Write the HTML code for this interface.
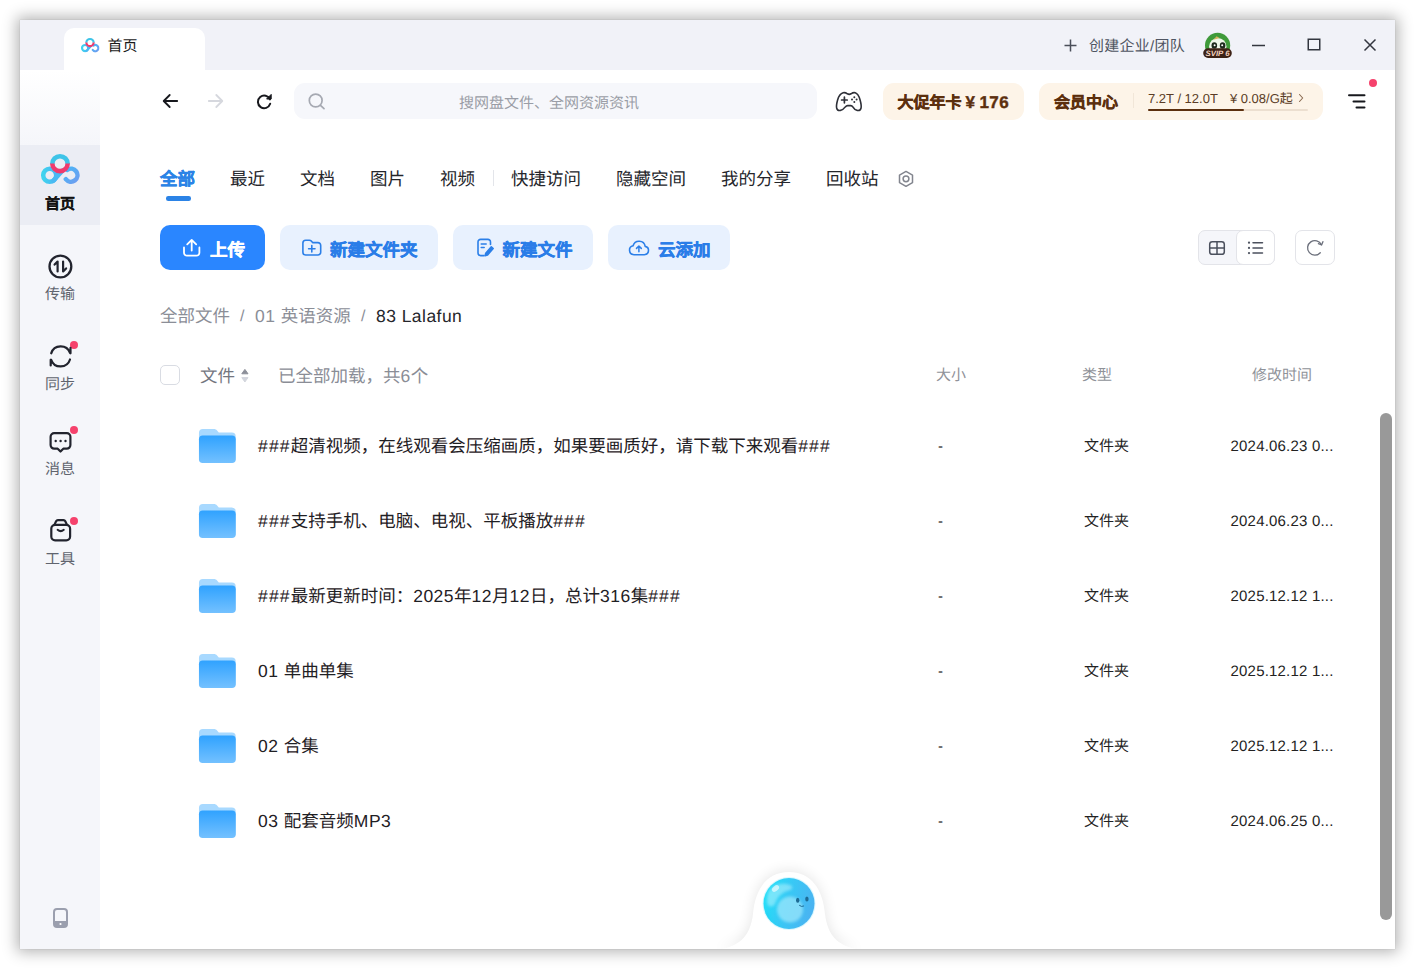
<!DOCTYPE html>
<html lang="zh-CN">
<head>
<meta charset="utf-8">
<title>首页</title>
<style>
*{box-sizing:border-box;margin:0;padding:0}
html,body{width:1415px;height:969px;overflow:hidden;background:#fff}
body{font-family:"Liberation Sans",sans-serif;text-rendering:geometricPrecision;position:relative;color:#1a1a1a}
.abs{position:absolute}
.t{position:absolute;white-space:nowrap;line-height:1}
#win{position:absolute;left:20px;top:20px;width:1375px;height:929px;background:#fff;
 box-shadow:0 0 1px rgba(0,0,0,.18),0 0 14px 3px rgba(0,0,0,.30);}
#titlebar{position:absolute;left:0;top:0;width:1375px;height:50px;background:#f1f2f8}
#tab{position:absolute;left:44px;top:8px;width:141px;height:42px;background:#fff;border-radius:10px 10px 0 0}
#side{position:absolute;left:0;top:50px;width:80px;height:879px;background:linear-gradient(#ffffff 0px,#f5f6fa 75px,#f5f6fa 100%)}
#side .sel{position:absolute;left:0;top:75px;width:80px;height:80px;background:#ebedf4}
.slabel{position:absolute;left:0;width:80px;text-align:center;font-size:15px;line-height:16px;color:#60646e;white-space:nowrap}
.dot{position:absolute;width:8px;height:8px;border-radius:50%;background:#f5426c}
#search{position:absolute;left:274px;top:63px;width:523px;height:36px;border-radius:11px;background:#f6f7fb}
.badge{position:absolute;top:63px;height:36.500px;border-radius:11px;background:#fdf4e8}
.nav{position:absolute;top:149px;font-size:17.5px;line-height:20px;color:#25262b;white-space:nowrap}
.btn{position:absolute;top:205px;height:45px;border-radius:10px;background:#e8f1fe;color:#2a7de8;font-weight:bold;font-size:17.5px;white-space:nowrap}
.btn span{position:absolute;top:15px;line-height:20px;-webkit-text-stroke:.45px currentColor}
.hv{-webkit-text-stroke:.4px currentColor}
.hdr{position:absolute;top:347px;font-size:15px;line-height:18px;color:#8f9299;white-space:nowrap}
.row{position:absolute;left:140px;width:1200px;height:75px}
.row .nm{position:absolute;left:98px;top:27px;font-size:17.5px;line-height:22px;color:#1f2024;white-space:nowrap}
.row .sz{position:absolute;left:778px;top:29px;font-size:15px;line-height:20px;color:#222}
.row .ty{position:absolute;left:924px;top:29px;font-size:15px;line-height:20px;color:#222;white-space:nowrap}
.row .dt{position:absolute;left:1070.500px;top:29px;font-size:15px;letter-spacing:.2px;line-height:20px;color:#222;white-space:nowrap}
.row .nm i{font-style:normal;letter-spacing:1.15px}
.ls{letter-spacing:.5px}
.ls b,.nm b{font-weight:normal;letter-spacing:.5px}
.row svg.fd{position:absolute;left:38px;top:19.500px}
</style>
</head>
<body>
<div id="win">
  <div id="titlebar">
    <div id="tab"></div>
    <div class="t" style="left:87.500px;top:19px;font-size:15px;color:#1a1a1a">首页</div>
    <div class="t" style="left:1069px;top:18.500px;font-size:15px;letter-spacing:.25px;color:#4f5562">创建企业/团队</div>
  </div>
  <div id="side">
    <div class="sel"></div>
    <div class="slabel hv" style="top:127px;color:#111;font-weight:bold;-webkit-text-stroke:.15px #111">首页</div>
    <div class="slabel" style="top:216.500px">传输</div>
    <div class="slabel" style="top:306.500px">同步</div>
    <div class="slabel" style="top:391.500px">消息</div>
    <div class="slabel" style="top:481.500px">工具</div>
    <div class="dot" style="left:50px;top:270.800px"></div>
    <div class="dot" style="left:50px;top:356.300px"></div>
    <div class="dot" style="left:50px;top:446.600px"></div>
  </div>

  <!-- toolbar -->
  <div id="search"></div>
  <div class="t" style="left:439px;top:75.500px;font-size:15px;color:#9a9da6">搜网盘文件、全网资源资讯</div>
  <div class="badge" style="left:863px;width:141px"></div>
  <div class="t hv" style="left:877.5px;top:74px;font-size:16px;font-weight:bold;color:#5c2f0e">大促年卡<span style="margin-left:4px;font-size:17px">¥</span><span style="margin-left:4.5px;letter-spacing:.4px;font-size:17px">176</span></div>
  <div class="badge" style="left:1019px;width:284px"></div>
  <div class="t hv" style="left:1034px;top:76px;font-size:16px;font-weight:bold;color:#5c2f0e">会员中心</div>
  <div class="abs" style="left:1113px;top:73px;width:1px;height:15px;background:#f1e6d8"></div>
  <div class="t" style="left:1128px;top:72px;font-size:13px;color:#5a3c26">7.2T / 12.0T</div>
  <div class="t" style="left:1210px;top:72px;font-size:13px;color:#5a3c26">¥<span style="margin-left:3.500px">0.08/G起</span></div>
  <div class="abs" style="left:1128px;top:89px;width:160px;height:2px;background:#ecdfd0;border-radius:1px"></div>
  <div class="abs" style="left:1128px;top:89px;width:96px;height:2px;background:#5c2f0e;border-radius:1px"></div>
  <div class="dot" style="left:1349px;top:59px;width:8px;height:8px"></div>

  <!-- nav tabs -->
  <div class="nav hv" style="left:140px;color:#2b83e6;font-weight:bold">全部</div>
  <div class="abs" style="left:145.500px;top:176px;width:25px;height:4.500px;border-radius:2.250px;background:#2b83e6"></div>
  <div class="nav" style="left:210px">最近</div>
  <div class="nav" style="left:280px">文档</div>
  <div class="nav" style="left:350px">图片</div>
  <div class="nav" style="left:420px">视频</div>
  <div class="abs" style="left:473px;top:150px;width:1px;height:16px;background:#e3e5ea"></div>
  <div class="nav" style="left:491px">快捷访问</div>
  <div class="nav" style="left:596px">隐藏空间</div>
  <div class="nav" style="left:701px">我的分享</div>
  <div class="nav" style="left:806px">回收站</div>

  <!-- buttons -->
  <div class="btn" style="left:140px;width:105px;background:#2a86ff;color:#fff"><span style="left:50px">上传</span></div>
  <div class="btn" style="left:260px;width:158px"><span style="left:50px">新建文件夹</span></div>
  <div class="btn" style="left:433px;width:140px"><span style="left:49.500px">新建文件</span></div>
  <div class="btn" style="left:588px;width:122px"><span style="left:50px">云添加</span></div>

  <div class="abs" style="left:1178px;top:210px;width:77px;height:35px;border:1px solid #e3e4e9;border-radius:7px;background:#f5f6fa"></div>
  <div class="abs" style="left:1216px;top:210px;width:39px;height:35px;border:1px solid #e3e4e9;border-radius:7px;background:#fff"></div>
  <div class="abs" style="left:1275px;top:210px;width:40px;height:35px;border:1px solid #e3e4e9;border-radius:7px;background:#fff"></div>

  <!-- breadcrumb -->
  <div class="t" style="left:140px;top:288px;font-size:17.5px;color:#8b8e97">全部文件</div>
  <div class="t" style="left:220px;top:289px;font-size:16px;color:#8b8e97">/</div>
  <div class="t" style="left:235px;top:288px;font-size:17.5px;color:#8b8e97"><b style="font-weight:normal;letter-spacing:.5px">01 </b>英语资源</div>
  <div class="t" style="left:341px;top:289px;font-size:16px;color:#8b8e97">/</div>
  <div class="t" style="left:356px;top:288px;font-size:17.5px;letter-spacing:.45px;color:#25262b">83 Lalafun</div>

  <!-- list header -->
  <div class="abs" style="left:140px;top:345px;width:20px;height:20px;border:1px solid #d9dce3;border-radius:5px;background:#fff"></div>
  <div class="t" style="left:180px;top:347.500px;font-size:17.5px;color:#73767f">文件</div>
  <div class="t" style="left:258px;top:347.500px;font-size:17.5px;color:#8a8d96">已全部加载，共<b style="font-weight:normal;letter-spacing:.5px">6</b>个</div>
  <div class="hdr" style="left:916px">大小</div>
  <div class="hdr" style="left:1062px">类型</div>
  <div class="hdr" style="left:1232px">修改时间</div>

  <div class="row" style="top:388px"><svg class="fd" width="38.7" height="36" viewBox="0 0 40 36" preserveAspectRatio="none"><defs><linearGradient id="fg0" x1="0" y1="0" x2="0" y2="1"><stop offset="0" stop-color="#2fa2ff"/><stop offset="1" stop-color="#74c1ff"/></linearGradient></defs><path d="M1 5a4 4 0 0 1 4-4h11.500c1.300 0 2.400.5 3.200 1.500l1.800 2H35a4 4 0 0 1 4 4V30a4 4 0 0 1-4 4H5a4 4 0 0 1-4-4z" fill="#a8d9ff"/><rect x="1" y="7.400" width="38" height="27.600" rx="3.800" fill="url(#fg0)"/></svg><div class="nm"><i>###</i>超清视频，在线观看会压缩画质，如果要画质好，请下载下来观看<i>###</i></div><div class="sz">-</div><div class="ty">文件夹</div><div class="dt">2024.06.23 0...</div></div>
  <div class="row" style="top:463px"><svg class="fd" width="38.7" height="36" viewBox="0 0 40 36" preserveAspectRatio="none"><defs><linearGradient id="fg1" x1="0" y1="0" x2="0" y2="1"><stop offset="0" stop-color="#2fa2ff"/><stop offset="1" stop-color="#74c1ff"/></linearGradient></defs><path d="M1 5a4 4 0 0 1 4-4h11.500c1.300 0 2.400.5 3.200 1.500l1.800 2H35a4 4 0 0 1 4 4V30a4 4 0 0 1-4 4H5a4 4 0 0 1-4-4z" fill="#a8d9ff"/><rect x="1" y="7.400" width="38" height="27.600" rx="3.800" fill="url(#fg1)"/></svg><div class="nm"><i>###</i>支持手机、电脑、电视、平板播放<i>###</i></div><div class="sz">-</div><div class="ty">文件夹</div><div class="dt">2024.06.23 0...</div></div>
  <div class="row" style="top:538px"><svg class="fd" width="38.7" height="36" viewBox="0 0 40 36" preserveAspectRatio="none"><defs><linearGradient id="fg2" x1="0" y1="0" x2="0" y2="1"><stop offset="0" stop-color="#2fa2ff"/><stop offset="1" stop-color="#74c1ff"/></linearGradient></defs><path d="M1 5a4 4 0 0 1 4-4h11.500c1.300 0 2.400.5 3.200 1.500l1.800 2H35a4 4 0 0 1 4 4V30a4 4 0 0 1-4 4H5a4 4 0 0 1-4-4z" fill="#a8d9ff"/><rect x="1" y="7.400" width="38" height="27.600" rx="3.800" fill="url(#fg2)"/></svg><div class="nm"><i>###</i>最新更新时间：<b>2025</b>年<b>12</b>月<b>12</b>日，总计<b>316</b>集<i>###</i></div><div class="sz">-</div><div class="ty">文件夹</div><div class="dt">2025.12.12 1...</div></div>
  <div class="row" style="top:613px"><svg class="fd" width="38.7" height="36" viewBox="0 0 40 36" preserveAspectRatio="none"><defs><linearGradient id="fg3" x1="0" y1="0" x2="0" y2="1"><stop offset="0" stop-color="#2fa2ff"/><stop offset="1" stop-color="#74c1ff"/></linearGradient></defs><path d="M1 5a4 4 0 0 1 4-4h11.500c1.300 0 2.400.5 3.200 1.500l1.800 2H35a4 4 0 0 1 4 4V30a4 4 0 0 1-4 4H5a4 4 0 0 1-4-4z" fill="#a8d9ff"/><rect x="1" y="7.400" width="38" height="27.600" rx="3.800" fill="url(#fg3)"/></svg><div class="nm"><b>01 </b>单曲单集</div><div class="sz">-</div><div class="ty">文件夹</div><div class="dt">2025.12.12 1...</div></div>
  <div class="row" style="top:688px"><svg class="fd" width="38.7" height="36" viewBox="0 0 40 36" preserveAspectRatio="none"><defs><linearGradient id="fg4" x1="0" y1="0" x2="0" y2="1"><stop offset="0" stop-color="#2fa2ff"/><stop offset="1" stop-color="#74c1ff"/></linearGradient></defs><path d="M1 5a4 4 0 0 1 4-4h11.500c1.300 0 2.400.5 3.200 1.500l1.800 2H35a4 4 0 0 1 4 4V30a4 4 0 0 1-4 4H5a4 4 0 0 1-4-4z" fill="#a8d9ff"/><rect x="1" y="7.400" width="38" height="27.600" rx="3.800" fill="url(#fg4)"/></svg><div class="nm"><b>02 </b>合集</div><div class="sz">-</div><div class="ty">文件夹</div><div class="dt">2025.12.12 1...</div></div>
  <div class="row" style="top:763px"><svg class="fd" width="38.7" height="36" viewBox="0 0 40 36" preserveAspectRatio="none"><defs><linearGradient id="fg5" x1="0" y1="0" x2="0" y2="1"><stop offset="0" stop-color="#2fa2ff"/><stop offset="1" stop-color="#74c1ff"/></linearGradient></defs><path d="M1 5a4 4 0 0 1 4-4h11.500c1.300 0 2.400.5 3.200 1.500l1.800 2H35a4 4 0 0 1 4 4V30a4 4 0 0 1-4 4H5a4 4 0 0 1-4-4z" fill="#a8d9ff"/><rect x="1" y="7.400" width="38" height="27.600" rx="3.800" fill="url(#fg5)"/></svg><div class="nm"><b>03 </b>配套音频<b>MP3</b></div><div class="sz">-</div><div class="ty">文件夹</div><div class="dt">2024.06.25 0...</div></div>

  <!-- scrollbar -->
  <div class="abs" style="left:1360px;top:393px;width:12px;height:507px;border-radius:6px;background:#999"></div>
</div>
<svg id="icons" class="abs" style="left:0;top:0;pointer-events:none" width="1415" height="969" viewBox="0 0 1415 969" fill="none">
  <defs>
    <linearGradient id="lgL" x1="0" y1="0" x2="1" y2="0"><stop offset="0" stop-color="#3fd3ee"/><stop offset="1" stop-color="#4db4f4"/></linearGradient>
    <linearGradient id="lgR" x1="0" y1="0" x2="1" y2="1"><stop offset="0" stop-color="#4bb6f6"/><stop offset="1" stop-color="#6d9df0"/></linearGradient>
    <symbol id="logo" viewBox="0 0 40 32">
      <circle cx="9.7" cy="22.2" r="6.5" stroke="url(#lgL)" stroke-width="4.5"/>
      <path d="M13.6 27.4 L22.6 17.6" stroke="#4ab9f3" stroke-width="4.5" stroke-linecap="round"/>
      <path d="M25.8 26.2 A6.5 6.5 0 1 0 27.2 16.9" stroke="url(#lgR)" stroke-width="4.5" stroke-linecap="round"/>
      <path d="M12.3 10.9 A7.7 7.7 0 0 1 27.7 10.9" stroke="#3ec4e8" stroke-width="4.6"/>
      <path d="M12.3 10.4 A7.7 7.7 0 0 0 27.7 10.4" stroke="#ef3b6e" stroke-width="4.6"/>
    </symbol>
  </defs>
  <!-- assistant bump + ball -->
  <defs>
    <filter id="bsh" x="-20%" y="-30%" width="140%" height="160%"><feGaussianBlur stdDeviation="7"/></filter>
    <linearGradient id="ballg" x1="0" y1="0.3" x2="1" y2="0.6"><stop offset="0" stop-color="#22e0f8"/><stop offset="0.45" stop-color="#38c9f5"/><stop offset="1" stop-color="#4bb2f1"/></linearGradient><filter id="b2" x="-30%" y="-30%" width="160%" height="160%"><feGaussianBlur stdDeviation="1.6"/></filter><clipPath id="ballclip"><circle cx="789" cy="903.5" r="25.5"/></clipPath>
    <radialGradient id="ballh" cx="0.5" cy="0.5" r="0.5"><stop offset="0" stop-color="#ffffff" stop-opacity=".75"/><stop offset="1" stop-color="#ffffff" stop-opacity="0"/></radialGradient>
    <clipPath id="winclip"><rect x="20" y="20" width="1375" height="929"/></clipPath>
  </defs>
  <g clip-path="url(#winclip)">
    <path d="M716 949c22-3 34-12 37-36 2-25 14-42 36-42s34 17 36 42c3 24 15 33 37 36z" fill="#000" opacity=".10" filter="url(#bsh)"/>
    <path d="M716 950c22-3 34-12 37-36 2-25 14-42 36-42s34 17 36 42c3 24 15 33 37 36z" fill="#fff"/>
    <circle cx="789" cy="903.500" r="26.500" fill="#d9f7fe"/>
    <circle cx="789" cy="903.500" r="25.500" fill="url(#ballg)"/>
    <g clip-path="url(#ballclip)"><circle cx="790" cy="909.500" r="13" fill="#9be6fb" opacity=".75" filter="url(#b2)"/><path d="M768 893c4-8 13-11 22-8 3 1 3 4 0 5-8 2-13 7-15 14-2 4-8 3-8-2 0-3 0-6 1-9z" fill="#b8f2fd" opacity=".55" filter="url(#b2)"/><path d="M768 912c1 8 6 14 14 16-9 1-17-5-19-14z" fill="#17d3f3" opacity=".5" filter="url(#b2)"/></g>
    <ellipse cx="775.500" cy="888.500" rx="4" ry="2.600" transform="rotate(-38 775.5 888.5)" fill="#fff" opacity=".6"/>
    <ellipse cx="797.700" cy="900.300" rx="1.700" ry="2.500" fill="#1d6b94"/>
    <ellipse cx="806.900" cy="899" rx="1.700" ry="2.500" fill="#1d6b94"/>
    <path d="M799.500 905.500q2 1.800 4.200 .6" stroke="#1d6b94" stroke-width="1" stroke-linecap="round"/>
  </g>
  <!-- tab logo -->
  <use href="#logo" x="80.5" y="37.5" width="19" height="15.2"/>
  <!-- sidebar logo -->
  <use href="#logo" x="40" y="153" width="40" height="32"/>

  <!-- title bar right -->
  <path d="M1064.5 45.5h12M1070.5 39.5v12" stroke="#4a4e59" stroke-width="1.5"/>
  <g>
    <circle cx="1217.6" cy="45.4" r="12.6" fill="#3f9a3a"/>
    <circle cx="1217.8" cy="46.6" r="8.7" fill="#eef7ea"/>
    <path d="M1213.400 39.800l3.200-3.600 3 1.800z" fill="#d9b45c"/>
    <ellipse cx="1214.300" cy="45.500" rx="2.800" ry="3.200" fill="#1d2a1d"/>
    <ellipse cx="1222.600" cy="45.500" rx="2.800" ry="3.200" fill="#1d2a1d"/>
    <circle cx="1214.600" cy="45.200" r="1" fill="#fff"/><circle cx="1222.200" cy="45.200" r="1" fill="#fff"/>
    <rect x="1203.2" y="48.2" width="28.6" height="9.8" rx="4.9" fill="#3c2216"/>
    <text x="1217.5" y="56" font-family="Liberation Sans, sans-serif" font-size="7.800" font-weight="bold" font-style="italic" fill="#f3d3c0" text-anchor="middle">SVIP 6</text>
  </g>
  <path d="M1252 45.5h13" stroke="#33363f" stroke-width="1.5"/>
  <rect x="1308.25" y="39.25" width="11.5" height="10.5" stroke="#33363f" stroke-width="1.5"/>
  <path d="M1364.5 39.5l11 11M1375.5 39.5l-11 11" stroke="#33363f" stroke-width="1.5"/>

  <!-- nav arrows -->
  <path d="M177.2 101H163.8M169.7 95L163.7 101l6 6" stroke="#17181d" stroke-width="1.8" stroke-linecap="round" stroke-linejoin="round"/>
  <path d="M208.8 101h13.4M216.3 95l6 6-6 6" stroke="#d6d8de" stroke-width="1.8" stroke-linecap="round" stroke-linejoin="round"/>
  <path d="M270 99.4A6.3 6.3 0 1 0 270.2 103.8" stroke="#17181d" stroke-width="2" stroke-linecap="round"/>
  <path d="M266.6 99h4.6v-4.6z" fill="#17181d" stroke="#17181d" stroke-width="1" stroke-linejoin="round"/>
  <!-- search icon -->
  <circle cx="315.7" cy="100.5" r="6.4" stroke="#a6a9b2" stroke-width="1.7"/>
  <path d="M320.5 105.3l3.5 3.3" stroke="#a6a9b2" stroke-width="1.7" stroke-linecap="round"/>

  <!-- game controller -->
  <path d="M843.2 92.8c1.8-.5 3 .2 4.200 1 1 .6 2.600 .6 3.600 0 1.200-.8 2.400-1.500 4.200-1 2.600 .8 3.900 3.600 4.900 7.200 .9 3.300 1.400 6.500 .9 8.200-.5 1.800-2 2.500-3.700 2.200-2-.4-3.500-1.700-4.500-3.500-.5-.9-1.100-1.300-2.100-1.300h-3c-1 0-1.700 .4-2.400 1.300-1.300 1.800-2.900 3.100-4.900 3.500-1.700 .3-3.200-.4-3.700-2.200-.5-1.700 0-4.900 .9-8.200 1-3.600 2.900-6.400 5.600-7.200z" stroke="#2e3038" stroke-width="1.6" stroke-linejoin="round"/>
  <path d="M841.6 100h5.600M844.4 97.200v5.600" stroke="#2e3038" stroke-width="1.7" stroke-linecap="round"/>
  <g fill="#2e3038"><circle cx="854.3" cy="97.300" r="1"/><circle cx="854.3" cy="101.9" r="1"/><circle cx="852" cy="99.600" r="1"/><circle cx="856.6" cy="99.600" r="1"/></g>

  <!-- member chevron -->
  <path d="M1299.5 94.500l3.200 3.500-3.200 3.500" stroke="#8a6a50" stroke-width="1.100" stroke-linecap="round" stroke-linejoin="round"/>
  <!-- menu -->
  <path d="M1349 95.200h15.500M1353.500 101.500h11M1356.500 107.600h8" stroke="#17181d" stroke-width="2" stroke-linecap="round"/>

  <!-- hexagon settings -->
  <path d="M906 171.400l6.500 3.700v7.500l-6.500 3.700-6.500-3.700v-7.500z" stroke="#82858e" stroke-width="1.5" stroke-linejoin="round"/>
  <circle cx="906" cy="178.800" r="2.900" stroke="#82858e" stroke-width="1.5"/>

  <!-- upload icon -->
  <path d="M184 247.500v5.200a3 3 0 0 0 3 3h9.400a3 3 0 0 0 3-3v-5.200" stroke="#fff" stroke-width="1.800" stroke-linecap="round"/>
  <path d="M191.700 250.500V240.500M187.200 244.400l4.500-4.500 4.500 4.500" stroke="#fff" stroke-width="1.800" stroke-linecap="round" stroke-linejoin="round"/>
  <!-- new folder icon -->
  <path d="M302.900 243a2.800 2.800 0 0 1 2.800-2.800h3.600c.8 0 1.500 .3 2 .9l1.300 1.500h5.300a2.800 2.800 0 0 1 2.800 2.800v6.800a2.800 2.800 0 0 1-2.800 2.800h-12.200a2.800 2.800 0 0 1-2.800-2.800z" stroke="#2b7fe8" stroke-width="1.600" stroke-linejoin="round"/>
  <path d="M308.600 248.700h6.400M311.800 245.500v6.400" stroke="#2b7fe8" stroke-width="1.600" stroke-linecap="round"/>
  <!-- new file icon -->
  <path d="M490.500 244.500v-2.500a2.600 2.600 0 0 0-2.600-2.600h-7.300a2.600 2.600 0 0 0-2.600 2.600v11a2.600 2.600 0 0 0 2.600 2.600h3.400" stroke="#2b7fe8" stroke-width="1.600" stroke-linecap="round"/>
  <path d="M481.200 244h5M481.200 247.500h3" stroke="#2b7fe8" stroke-width="1.500" stroke-linecap="round"/>
  <path d="M491.300 246.700l1.900 1.900-5.600 6.500-2.500 .6 .6-2.500z" stroke="#2b7fe8" stroke-width="1.500" stroke-linejoin="round" fill="#2b7fe8"/>
  <!-- cloud add icon -->
  <path d="M634 254.700h10.300a4.200 4.200 0 0 0 .9-8.300 6.200 6.200 0 0 0-12.100-.6A4.500 4.500 0 0 0 634 254.700z" stroke="#2b7fe8" stroke-width="1.600" stroke-linejoin="round"/>
  <path d="M638.900 251.800v-5.400M636.500 248.400l2.400-2.400 2.400 2.400" stroke="#2b7fe8" stroke-width="1.500" stroke-linecap="round" stroke-linejoin="round"/>

  <!-- view toggle icons -->
  <rect x="1209.700" y="241.700" width="14.600" height="12.600" rx="2.600" stroke="#4b505d" stroke-width="1.500"/>
  <path d="M1217 241.700v12.600M1209.700 248h14.600" stroke="#4b505d" stroke-width="1.500"/>
  <path d="M1253 242.700h9.500M1253 247.900h9.500M1253 253.100h9.500" stroke="#4b505d" stroke-width="1.500" stroke-linecap="round"/>
  <g fill="#4b505d"><circle cx="1249" cy="242.700" r="1.100"/><circle cx="1249" cy="247.900" r="1.100"/><circle cx="1249" cy="253.100" r="1.100"/></g>
  <path d="M1321.400 244.600A7.300 7.300 0 1 0 1320.300 252.800" stroke="#6b6f7b" stroke-width="1.300" stroke-linecap="round"/>
  <path d="M1318.400 243.700l3.200 1.300 1.300-3.300" stroke="#6b6f7b" stroke-width="1.300" stroke-linecap="round" stroke-linejoin="round"/>

  <!-- sort icon -->
  <path d="M241.800 373.800l3.100-4.400 3.100 4.400z" fill="#8c8f99" stroke="#8c8f99" stroke-width="1" stroke-linejoin="round"/>
  <path d="M241.800 377.600l3.100 4.400 3.100-4.400z" fill="#d3d6dd" stroke="#d3d6dd" stroke-width="1" stroke-linejoin="round"/>

  <!-- sidebar: transfer -->
  <circle cx="60.400" cy="266.500" r="10.900" stroke="#22242e" stroke-width="2.300"/>
  <path d="M57.600 271.500v-10l-3 3.100M63.100 261.500v10l3-3.100" stroke="#22242e" stroke-width="2.200" stroke-linecap="round" stroke-linejoin="round"/>
  <!-- sidebar: sync -->
  <path d="M51.200 353.300A9.900 9.900 0 0 1 70 353M70.500 347.900v5.400" stroke="#22242e" stroke-width="2.200" stroke-linecap="round" stroke-linejoin="round"/>
  <path d="M70 359.500A9.900 9.900 0 0 1 51.200 359.800M50.700 365.400v-5.600" stroke="#22242e" stroke-width="2.200" stroke-linecap="round" stroke-linejoin="round"/>
  <!-- sidebar: message -->
  <path d="M54.200 433.100h12.600a3.600 3.600 0 0 1 3.600 3.600v8.400a3.600 3.600 0 0 1-3.600 3.600h-3.500l-2.800 2.800-2.800-2.800h-3.500a3.600 3.600 0 0 1-3.600-3.600v-8.400a3.600 3.600 0 0 1 3.600-3.600z" stroke="#22242e" stroke-width="2.200" stroke-linejoin="round"/>
  <g fill="#22242e"><circle cx="55.700" cy="441" r="1.200"/><circle cx="60.600" cy="441" r="1.200"/><circle cx="65.500" cy="441" r="1.200"/></g>
  <!-- sidebar: tools -->
  <rect x="51.300" y="524.900" width="18.800" height="15.400" rx="3.800" stroke="#22242e" stroke-width="2.200"/>
  <path d="M54.600 524.400l1.500-3.200a2 2 0 0 1 1.800-1.100h5.600a2 2 0 0 1 1.800 1.100l1.500 3.200" stroke="#22242e" stroke-width="2.200" stroke-linejoin="round"/>
  <path d="M57.600 529.800q3.100 2.600 6.200 0" stroke="#22242e" stroke-width="2" stroke-linecap="round"/>
  <!-- sidebar: phone -->
  <rect x="54" y="909" width="13" height="18" rx="3" stroke="#9b9fae" stroke-width="2"/>
  <path d="M54 921h13v3a3 3 0 0 1-3 3h-7a3 3 0 0 1-3-3z" fill="#9b9fae"/>
  <circle cx="60.500" cy="924" r="1.100" fill="#fff"/>
</svg>
</body>
</html>
